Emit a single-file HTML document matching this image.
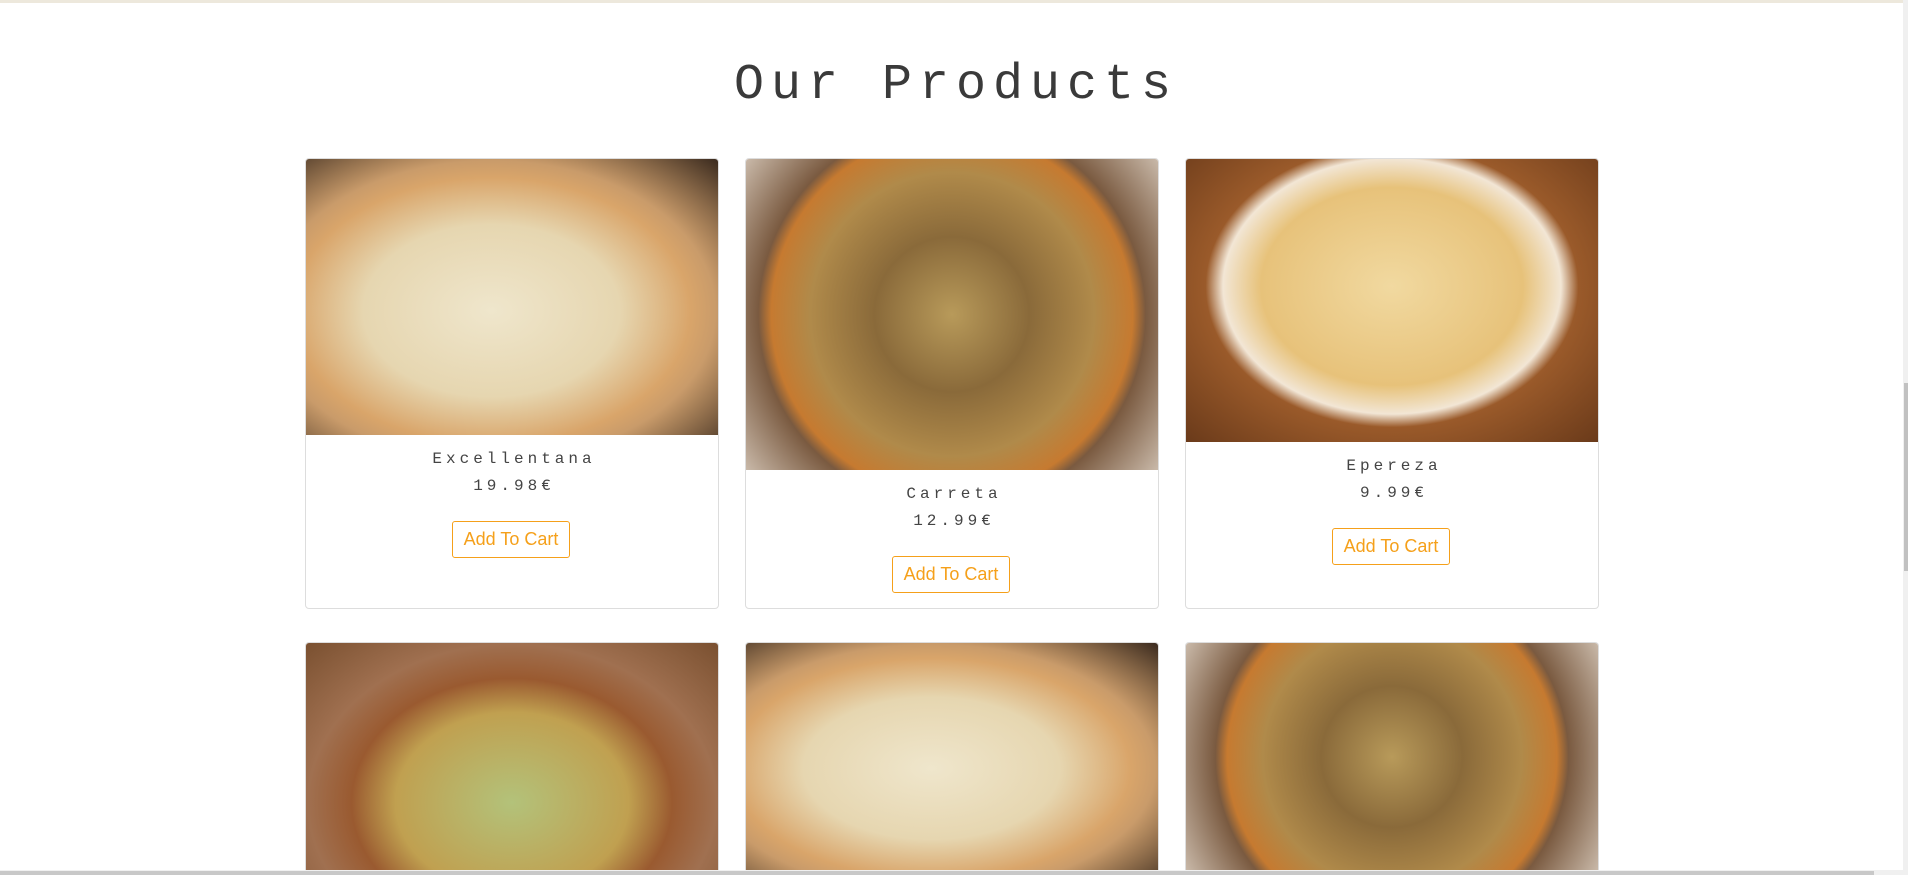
<!DOCTYPE html>
<html><head><meta charset="utf-8"><style>
*{margin:0;padding:0;box-sizing:border-box}
html,body{width:1908px;height:875px;overflow:hidden;background:#fff;position:relative}
.top{position:absolute;left:0;top:0;width:1903px;height:3px;background:#ede8dc}
h1{position:absolute;left:0;width:1905px;top:54px;text-align:center;font:50px "Liberation Mono",monospace;font-weight:normal;letter-spacing:7px;color:#3a3a3a;line-height:64px;padding-left:7px}
.card{position:absolute;width:414px;border:1px solid #ddd;border-radius:4px;overflow:hidden;background:#fff}
.img{width:100%}
.nm{position:absolute;left:0;right:0;text-align:center;font:16px "Liberation Mono",monospace;letter-spacing:4px;color:#444;line-height:20px;padding-left:4px}
.btn{position:absolute;left:146px;width:118px;height:37px;border:1px solid #f5a01a;border-radius:3px;color:#f5a01a;font:18px "Liberation Sans",sans-serif;text-align:center;line-height:35px}
.vs{position:absolute;left:1903px;top:0;width:5px;height:875px;background:#f0f0f0}
.vt{position:absolute;left:1904px;top:383px;width:4px;height:188px;background:#c1c1c1}
.hs{position:absolute;left:0;top:870px;width:1908px;height:5px;background:#f0f0f0}
.ht{position:absolute;left:0;top:871px;width:1874px;height:4px;background:#c8c8c8}
.p1{background:radial-gradient(ellipse at 45% 55%,#efe6cc 0,#e6d6b0 40%,#d9a56a 62%,#c99b6a 70%,#3a2a1e 100%)}
.p2{background:radial-gradient(circle at 50% 50%,#b89a5a 0,#8a6a3a 30%,#b08a4a 55%,#c67a30 70%,#7a5a40 75%,#c9b9a9 100%)}
.p3{background:radial-gradient(ellipse at 50% 45%,#f1d9a0 0,#e7c27a 45%,#f2e6d5 58%,#9a5a2a 64%,#6a3a1a 100%)}
.p4{background:radial-gradient(ellipse at 50% 70%,#b3c27a 0,#c0a050 40%,#9a5a30 55%,#a07050 70%,#7a5030 100%)}
</style></head><body>
<div class="top"></div>
<h1>Our Products</h1>

<div class="card" style="left:305px;top:158px;height:451px">
<div class="img p1" style="height:276px"></div>
<div class="nm" style="top:290px">Excellentana</div>
<div class="nm" style="top:317px">19.98€</div>
<div class="btn" style="top:362px">Add To Cart</div>
</div>
<div class="card" style="left:745px;top:158px;height:451px">
<div class="img p2" style="height:311px"></div>
<div class="nm" style="top:325px">Carreta</div>
<div class="nm" style="top:352px">12.99€</div>
<div class="btn" style="top:397px">Add To Cart</div>
</div>
<div class="card" style="left:1185px;top:158px;height:451px">
<div class="img p3" style="height:283px"></div>
<div class="nm" style="top:297px">Epereza</div>
<div class="nm" style="top:324px">9.99€</div>
<div class="btn" style="top:369px">Add To Cart</div>
</div>

<div class="card" style="left:305px;top:642px;height:228px;border-bottom:none;border-radius:4px 4px 0 0"><div class="img p4" style="height:228px"></div></div>
<div class="card" style="left:745px;top:642px;height:228px;border-bottom:none;border-radius:4px 4px 0 0"><div class="img p1" style="height:228px"></div></div>
<div class="card" style="left:1185px;top:642px;height:228px;border-bottom:none;border-radius:4px 4px 0 0"><div class="img p2" style="height:228px"></div></div>

<div class="vs"></div><div class="vt"></div>
<div class="hs"></div><div class="ht"></div>
</body></html>
